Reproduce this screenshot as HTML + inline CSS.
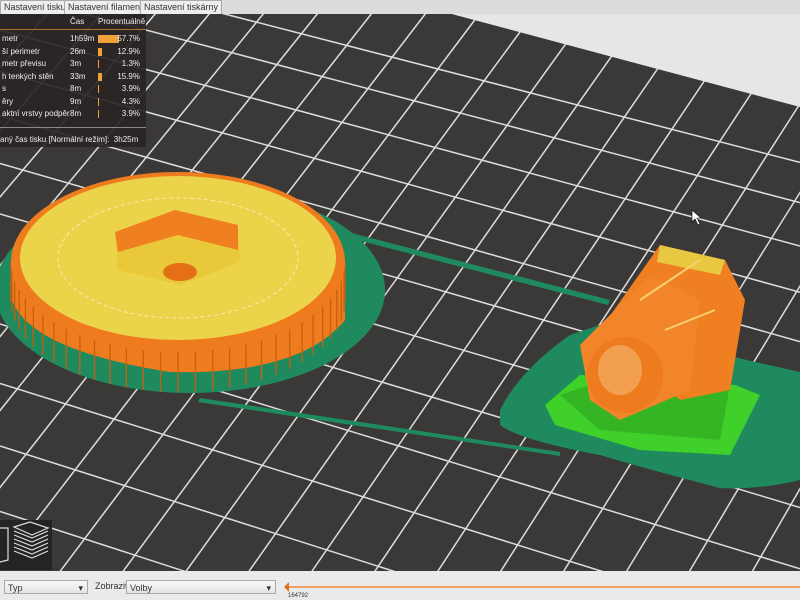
<!DOCTYPE html>
<html><head><meta charset="utf-8"><style>
html,body{margin:0;padding:0;width:800px;height:600px;overflow:hidden;background:#3b3938;font-family:"Liberation Sans",sans-serif}
#tabs{position:absolute;left:0;top:0;width:800px;height:14px;background:#dcdcdc;font-size:9px;color:#333;overflow:hidden}
.tab{position:absolute;top:0;height:13px;line-height:13px;padding:0 3px;border:1px solid #aaa;border-bottom:none;background:#eee;white-space:nowrap}
#panel{position:absolute;left:0;top:14px;width:146px;height:133px;background:rgba(40,37,36,0.92);color:#eee;font-size:8px;overflow:hidden}
#panel .r{position:absolute;left:0;width:146px;height:12px;white-space:nowrap}
#bottom{position:absolute;left:0;top:571px;width:800px;height:29px;background:#eaeaea;font-size:9px;color:#333;overflow:hidden}
.sel{position:absolute;top:9px;height:14px;border:1px solid #aaa;background:linear-gradient(#f8f8f8,#e4e4e4);line-height:14px;padding-left:3px;box-sizing:border-box}
</style></head><body>
<svg id="s" width="800" height="600" style="position:absolute;left:0;top:0;overflow:hidden">
<g id="grid" stroke="#dedede" stroke-width="1.5"></g>
<polygon points="448,0 800,0 800,107 448,13" fill="#e6e6e6"/>
<path d="M500,410 Q520,370 570,335 L600,325 Q700,350 800,372 L800,480 Q760,490 720,488 Q650,470 600,455 Q520,440 500,425Z" fill="#1f8a5e"/>
<path d="M340,230 L610,300 L608,305 L338,235Z" fill="#1f8a5e"/>
<path d="M200,398 L560,452 L560,456 L198,402Z" fill="#1f8a5e"/>
<ellipse cx="190" cy="290" rx="195" ry="103" fill="#1f8a5e"/>
<path d="M12,262 L12,300 Q30,350 170,372 Q300,375 345,320 L345,262Z" fill="#ee7b1e"/>
<g id="teeth" stroke="#c85e10" stroke-width="1.3"></g>
<ellipse cx="178" cy="262" rx="167" ry="90" fill="#ee7b1e"/>
<ellipse cx="178" cy="258" rx="158" ry="82" fill="#ecd44a"/>
<ellipse cx="178" cy="258" rx="120" ry="60" fill="none" stroke="#f7ecb0" stroke-width="1" stroke-dasharray="4 3"/>
<polygon points="115,232 175,210 238,225 240,262 180,285 118,270" fill="#e9c93a"/>
<polygon points="115,232 175,210 238,225 238,250 178,235 118,252" fill="#f07f20"/>
<ellipse cx="180" cy="272" rx="17" ry="9" fill="#e46f15"/>
<polygon points="545,405 580,375 735,385 760,395 730,455 640,450 555,425" fill="#3fd12a"/>
<polygon points="560,395 590,385 730,385 720,440 600,430" fill="#2b9a1c" opacity="0.5"/>
<polygon points="600,330 660,245 725,260 745,300 730,390 680,400" fill="#f07f22"/>
<polygon points="660,245 725,260 720,275 657,262" fill="#e7c840"/>
<polygon points="580,345 650,275 700,300 690,390 620,420 590,400" fill="#f2852a"/>
<circle cx="625" cy="375" r="38" fill="#ee7b1e"/>
<ellipse cx="620" cy="370" rx="22" ry="25" fill="#f2a050"/>
<line x1="640" y1="300" x2="700" y2="260" stroke="#f8d070" stroke-width="2"/>
<line x1="665" y1="330" x2="715" y2="310" stroke="#f8d070" stroke-width="2"/>
<path d="M692,210 L692,222 L695,219 L698,225 L700,224 L697,218 L701,218Z" fill="#fff" stroke="#000" stroke-width="0.6"/>
<rect x="0" y="520" width="52" height="50" fill="#262423"/>
<g stroke="#ddd" stroke-width="1.2" fill="none"><path d="M0,528 L8,528 L8,560 L0,562"/><path d="M14,527 L30,522 L48,528 L32,535Z"/><path d="M14,531 L32,538 L48,531 M14,535 L32,542 L48,535 M14,539 L32,546 L48,539 M14,543 L32,550 L48,543 M14,547 L32,554 L48,547 M14,551 L32,558 L48,551"/></g>
</svg>
<div id="tabs"><div class="tab" style="left:0">Nastavení tisku</div><div class="tab" style="left:64px">Nastavení filamentu</div><div class="tab" style="left:140px">Nastavení tiskárny</div></div>
<div id="panel">
<div style="position:absolute;left:70px;top:3px">Čas</div><div style="position:absolute;left:98px;top:3px">Procentuálně</div>
<div style="position:absolute;left:0;top:15px;width:146px;height:1px;background:#b07030"></div>
<div id="rows"></div>
<div style="position:absolute;left:0;top:113px;width:146px;height:1px;background:#888"></div>
<div style="position:absolute;left:0;top:121px;white-space:nowrap">aný čas tisku [Normální režim]:&nbsp; 3h25m</div>
</div>
<div id="bottom">
<div class="sel" style="left:4px;width:84px">Typ<span style="float:right;margin-right:4px">▾</span></div>
<div style="position:absolute;left:95px;top:10px">Zobrazit</div>
<div class="sel" style="left:126px;width:150px">Volby<span style="float:right;margin-right:4px">▾</span></div>
<div style="position:absolute;left:286px;top:15px;width:514px;height:2px;background:#f0a060"></div>
<div style="position:absolute;left:284px;top:11px;width:0;height:0;border:5px solid transparent;border-right-color:#e07020;border-left:none"></div>
<div style="position:absolute;left:288px;top:22px;font-size:6px">164792</div>
</div>
<script>
var ns="http://www.w3.org/2000/svg",g=document.getElementById('grid');
function L(x1,y1,x2,y2){var l=document.createElementNS(ns,'line');l.setAttribute('x1',x1);l.setAttribute('y1',y1);l.setAttribute('x2',x2);l.setAttribute('y2',y2);g.appendChild(l);}
for(var i=-2;i<16;i++){var y0=30+i*40+i*i*1.5;var s=0.27+i*0.006;L(0,y0,800,y0+800*s);}
for(var j=-8;j<20;j++){var x0=48+j*54;var k=0.88-0.016*j;L(x0,13,x0-587*k,600);}
var t=document.getElementById('teeth');
for(var a=0;a<=180;a+=6){var r=a*Math.PI/180;var x=178+167*Math.cos(r),y=262+90*Math.sin(r);var l=document.createElementNS(ns,'line');l.setAttribute('x1',x);l.setAttribute('y1',y);l.setAttribute('x2',x);l.setAttribute('y2',y+40);t.appendChild(l);}
var rows=[["metr","1h59m",52,"57.7%"],["ší perimetr","26m",10,"12.9%"],["metr převisu","3m",2,"1.3%"],["h tenkých stěn","33m",10,"15.9%"],["s","8m",3,"3.9%"],["ěry","9m",3,"4.3%"],["aktní vrstvy podpěr","8m",3,"3.9%"]];
var h="";rows.forEach(function(r,i){var y=20+i*12.5;h+='<div class="r" style="top:'+y+'px"><span style="position:absolute;left:2px">'+r[0]+'</span><span style="position:absolute;left:70px">'+r[1]+'</span><span style="position:absolute;left:98px;top:1px;width:'+(r[2]/2.5)+'px;height:8px;background:#f2a03a"></span><span style="position:absolute;right:6px">'+r[3]+'</span></div>';});
document.getElementById('rows').innerHTML=h;
</script>
</body></html>
